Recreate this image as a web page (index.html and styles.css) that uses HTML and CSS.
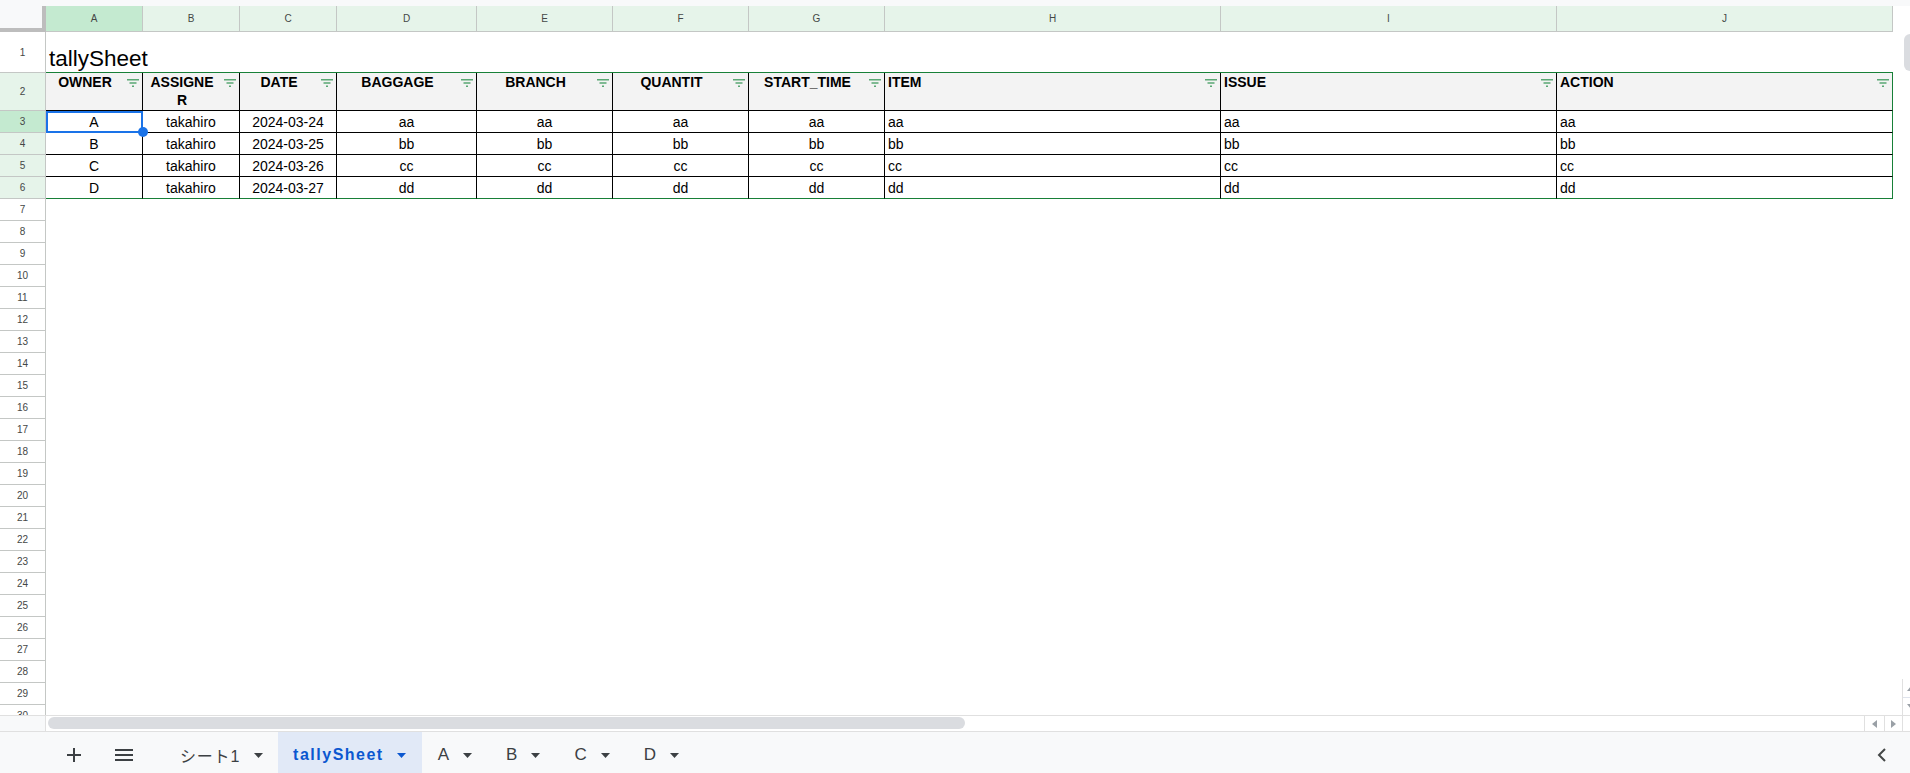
FILE: index.html
```html
<!DOCTYPE html>
<html lang="ja">
<head>
<meta charset="utf-8">
<title>tallySheet</title>
<link rel="stylesheet" href="styles.css">
</head>
<body>
<div class="app">
  <div class="topstrip"></div>
  <div class="main">
    <div class="grid">
      <table class="sheet">
        <colgroup>
          <col class="w-rh"><col class="w-s"><col class="w-s"><col class="w-s"><col class="w-d"><col class="w-m"><col class="w-m"><col class="w-m"><col class="w-l"><col class="w-l"><col class="w-l">
        </colgroup>
        <tr class="colhead">
          <th class="corner"></th><th class="sel">A</th><th>B</th><th>C</th><th>D</th><th>E</th><th>F</th><th>G</th><th>H</th><th>I</th><th>J</th>
        </tr>
        <tr class="r1">
          <th class="rh">1</th><td class="title" colspan="10">tallySheet</td>
        </tr>
        <tr class="r2">
          <th class="rh g">2</th>
          <td class="hd"><div class="in"><span class="t">OWNER</span><svg class="fi" width="12" height="8" viewBox="0 0 12 8"><path d="M0 0h12v1.6H0zM2.5 3.2h7v1.6h-7zM5 6.4h2V8H5z"/></svg></div></td>
          <td class="hd"><div class="in"><span class="t">ASSIGNE<br>R</span><svg class="fi" width="12" height="8" viewBox="0 0 12 8"><path d="M0 0h12v1.6H0zM2.5 3.2h7v1.6h-7zM5 6.4h2V8H5z"/></svg></div></td>
          <td class="hd"><div class="in"><span class="t">DATE</span><svg class="fi" width="12" height="8" viewBox="0 0 12 8"><path d="M0 0h12v1.6H0zM2.5 3.2h7v1.6h-7zM5 6.4h2V8H5z"/></svg></div></td>
          <td class="hd"><div class="in"><span class="t">BAGGAGE</span><svg class="fi" width="12" height="8" viewBox="0 0 12 8"><path d="M0 0h12v1.6H0zM2.5 3.2h7v1.6h-7zM5 6.4h2V8H5z"/></svg></div></td>
          <td class="hd"><div class="in"><span class="t">BRANCH</span><svg class="fi" width="12" height="8" viewBox="0 0 12 8"><path d="M0 0h12v1.6H0zM2.5 3.2h7v1.6h-7zM5 6.4h2V8H5z"/></svg></div></td>
          <td class="hd"><div class="in"><span class="t">QUANTIT</span><svg class="fi" width="12" height="8" viewBox="0 0 12 8"><path d="M0 0h12v1.6H0zM2.5 3.2h7v1.6h-7zM5 6.4h2V8H5z"/></svg></div></td>
          <td class="hd"><div class="in"><span class="t">START_TIME</span><svg class="fi" width="12" height="8" viewBox="0 0 12 8"><path d="M0 0h12v1.6H0zM2.5 3.2h7v1.6h-7zM5 6.4h2V8H5z"/></svg></div></td>
          <td class="hd left"><div class="in"><span class="t">ITEM</span><svg class="fi" width="12" height="8" viewBox="0 0 12 8"><path d="M0 0h12v1.6H0zM2.5 3.2h7v1.6h-7zM5 6.4h2V8H5z"/></svg></div></td>
          <td class="hd left"><div class="in"><span class="t">ISSUE</span><svg class="fi" width="12" height="8" viewBox="0 0 12 8"><path d="M0 0h12v1.6H0zM2.5 3.2h7v1.6h-7zM5 6.4h2V8H5z"/></svg></div></td>
          <td class="hd left last"><div class="in"><span class="t">ACTION</span><svg class="fi" width="12" height="8" viewBox="0 0 12 8"><path d="M0 0h12v1.6H0zM2.5 3.2h7v1.6h-7zM5 6.4h2V8H5z"/></svg></div></td>
        </tr>
        <tr class="r">
          <th class="rh gs">3</th>
          <td class="c cur">A<div class="selbox"></div><div class="handle"></div></td><td class="c">takahiro</td><td class="c">2024-03-24</td><td class="c">aa</td><td class="c">aa</td><td class="c">aa</td><td class="c">aa</td><td class="l">aa</td><td class="l">aa</td><td class="l last">aa</td>
        </tr>
        <tr class="r">
          <th class="rh g">4</th>
          <td class="c">B</td><td class="c">takahiro</td><td class="c">2024-03-25</td><td class="c">bb</td><td class="c">bb</td><td class="c">bb</td><td class="c">bb</td><td class="l">bb</td><td class="l">bb</td><td class="l last">bb</td>
        </tr>
        <tr class="r">
          <th class="rh g">5</th>
          <td class="c">C</td><td class="c">takahiro</td><td class="c">2024-03-26</td><td class="c">cc</td><td class="c">cc</td><td class="c">cc</td><td class="c">cc</td><td class="l">cc</td><td class="l">cc</td><td class="l last">cc</td>
        </tr>
        <tr class="r r6">
          <th class="rh g">6</th>
          <td class="c">D</td><td class="c">takahiro</td><td class="c">2024-03-27</td><td class="c">dd</td><td class="c">dd</td><td class="c">dd</td><td class="c">dd</td><td class="l">dd</td><td class="l">dd</td><td class="l last">dd</td>
        </tr>
        <tr class="r"><th class="rh">7</th><td colspan="10"></td></tr>
        <tr class="r"><th class="rh">8</th><td colspan="10"></td></tr>
        <tr class="r"><th class="rh">9</th><td colspan="10"></td></tr>
        <tr class="r"><th class="rh">10</th><td colspan="10"></td></tr>
        <tr class="r"><th class="rh">11</th><td colspan="10"></td></tr>
        <tr class="r"><th class="rh">12</th><td colspan="10"></td></tr>
        <tr class="r"><th class="rh">13</th><td colspan="10"></td></tr>
        <tr class="r"><th class="rh">14</th><td colspan="10"></td></tr>
        <tr class="r"><th class="rh">15</th><td colspan="10"></td></tr>
        <tr class="r"><th class="rh">16</th><td colspan="10"></td></tr>
        <tr class="r"><th class="rh">17</th><td colspan="10"></td></tr>
        <tr class="r"><th class="rh">18</th><td colspan="10"></td></tr>
        <tr class="r"><th class="rh">19</th><td colspan="10"></td></tr>
        <tr class="r"><th class="rh">20</th><td colspan="10"></td></tr>
        <tr class="r"><th class="rh">21</th><td colspan="10"></td></tr>
        <tr class="r"><th class="rh">22</th><td colspan="10"></td></tr>
        <tr class="r"><th class="rh">23</th><td colspan="10"></td></tr>
        <tr class="r"><th class="rh">24</th><td colspan="10"></td></tr>
        <tr class="r"><th class="rh">25</th><td colspan="10"></td></tr>
        <tr class="r"><th class="rh">26</th><td colspan="10"></td></tr>
        <tr class="r"><th class="rh">27</th><td colspan="10"></td></tr>
        <tr class="r"><th class="rh">28</th><td colspan="10"></td></tr>
        <tr class="r"><th class="rh">29</th><td colspan="10"></td></tr>
        <tr class="r"><th class="rh">30</th><td colspan="10"></td></tr>
      </table>
    </div>
    <div class="vscroll">
      <div class="vthumb"></div>
      <div class="varrows">
        <div class="varrow"><svg width="8" height="5" viewBox="0 0 8 5"><path d="M0 5L4 0L8 5z"/></svg></div>
        <div class="varrow"><svg width="8" height="5" viewBox="0 0 8 5"><path d="M0 0L4 5L8 0z"/></svg></div>
      </div>
    </div>
  </div>
  <div class="hscroll">
    <div class="hs-left"></div>
    <div class="hs-track"><div class="hs-thumb"></div></div>
    <div class="hs-btn b1"><svg width="5" height="8" viewBox="0 0 5 8"><path d="M5 0L0 4L5 8z"/></svg></div>
    <div class="hs-btn b2"><svg width="5" height="8" viewBox="0 0 5 8"><path d="M0 0L5 4L0 8z"/></svg></div>
    <div class="hs-corner"></div>
  </div>
  <div class="tabbar">
    <div class="tb-btn first"><svg width="14" height="14" viewBox="0 0 14 14"><path d="M6 0h2v6h6v2H8v6H6V8H0V6h6z"/></svg></div>
    <div class="tb-btn"><svg width="18" height="12" viewBox="0 0 18 12"><path d="M0 0h18v2H0zM0 5h18v2H0zM0 10h18v2H0z"/></svg></div>
    <div class="tab jp"><span class="lbl">シート1</span><svg class="dd" width="9" height="5" viewBox="0 0 9 5"><path d="M0 0h9L4.5 5z"/></svg></div>
    <div class="tab active"><span class="lbl">tallySheet</span><svg class="dd" width="9" height="5" viewBox="0 0 9 5"><path d="M0 0h9L4.5 5z"/></svg></div>
    <div class="tab"><span class="lbl">A</span><svg class="dd" width="9" height="5" viewBox="0 0 9 5"><path d="M0 0h9L4.5 5z"/></svg></div>
    <div class="tab"><span class="lbl">B</span><svg class="dd" width="9" height="5" viewBox="0 0 9 5"><path d="M0 0h9L4.5 5z"/></svg></div>
    <div class="tab"><span class="lbl">C</span><svg class="dd" width="9" height="5" viewBox="0 0 9 5"><path d="M0 0h9L4.5 5z"/></svg></div>
    <div class="tab"><span class="lbl">D</span><svg class="dd" width="9" height="5" viewBox="0 0 9 5"><path d="M0 0h9L4.5 5z"/></svg></div>
    <div class="chev"><svg width="10" height="14" viewBox="0 0 10 14"><path d="M8 1L2 7l6 6" fill="none" stroke="#444746" stroke-width="2"/></svg></div>
  </div>
</div>
</body>
</html>
```
FILE: styles.css
```css
* { box-sizing: border-box; }
html, body { margin: 0; padding: 0; }
body {
  width: 1910px;
  height: 773px;
  overflow: hidden;
  background: #fff;
  color: #000;
  font-family: "Liberation Sans", Arial, "Noto Sans CJK JP", sans-serif;
}
.app { display: flex; flex-direction: column; height: 773px; }
.topstrip { height: 6px; flex: none; background: #f8f9fa; }
.main { display: flex; height: 709px; flex: none; }
.grid { width: 1902px; flex: none; overflow: hidden; background: #fff; }

/* sheet grid */
.sheet {
  border-collapse: separate;
  border-spacing: 0;
  table-layout: fixed;
  width: 1893px;
  font-size: 14px;
}
.w-rh { width: 46px; }
.w-s { width: 97px; }
.w-d { width: 140px; }
.w-m { width: 136px; }
.w-l { width: 336px; }

.sheet td, .sheet th { padding: 0 3px; overflow: hidden; white-space: nowrap; }

.colhead th {
  height: 26px;
  background: #e6f4ea;
  border-right: 1px solid #c4c7c5;
  border-bottom: 1px solid #c4c7c5;
  font-weight: normal;
  font-size: 10px;
  color: #444746;
  text-align: center;
  vertical-align: middle;
}
.colhead th.sel { background: #c4ead0; }
.colhead th.corner {
  background: #f8f9fa;
  box-shadow: inset -3px -3px 0 #bdbdbd;
  border-right-color: #bdbdbd;
  border-bottom-color: #bdbdbd;
}

.rh {
  background: #fff;
  border-right: 1px solid #c4c7c5;
  border-bottom: 1px solid #c4c7c5;
  font-weight: normal;
  font-size: 10px;
  color: #444746;
  text-align: center;
  vertical-align: middle;
}
.rh.g { background: #e6f4ea; }
.rh.gs { background: #c4ead0; }

.r1 th, .r1 td { height: 41px; }
.r2 th, .r2 td { height: 38px; }
.r th, .r td { height: 22px; }

.title {
  vertical-align: bottom;
  padding: 0 3px 3px 4px;
  font-size: 22.5px;
  border-bottom: 1px solid #188038;
}

.hd {
  background: #f3f3f3;
  vertical-align: top;
  font-weight: bold;
  line-height: 18px;
  border-right: 1px solid #000;
  border-bottom: 1px solid #000;
  padding: 0 4px 0 3px;
}
.hd .in { display: flex; align-items: flex-start; }
.hd .t { flex: 1; text-align: center; }
.hd.left .t { text-align: left; }
.fi { flex: none; margin: 6px 0 0 6px; fill: #5aa874; }

.c, .l {
  line-height: 16px;
  vertical-align: middle;
  border-right: 1px solid #000;
  border-bottom: 1px solid #000;
}
.c { text-align: center; }
.l { text-align: left; padding-left: 4px; }
.sheet .last { border-right-color: #188038; }
.r6 td { border-bottom-color: #188038; }

.sheet td.cur { position: relative; overflow: visible; }
.selbox {
  position: absolute;
  left: 0; top: 0; right: -1px; bottom: -1px;
  border: 2px solid #1a73e8;
  z-index: 2;
}
.handle {
  position: absolute;
  width: 10px; height: 10px;
  right: -6px; bottom: -5px;
  border-radius: 50%;
  background: #1a73e8;
  z-index: 3;
}

/* vertical scrollbar */
.vscroll {
  width: 8px;
  flex: none;
  display: flex;
  flex-direction: column;
  justify-content: space-between;
  overflow: hidden;
  background: #fff;
}
.vthumb {
  flex: none;
  width: 12px;
  height: 37px;
  margin: 28px 0 0 2px;
  background: #dadce0;
  border-radius: 6px;
}
.varrows {
  flex: none;
  width: 16px;
  border-left: 1px solid #e0e0e0;
}
.varrow {
  height: 18px;
  display: flex;
  align-items: center;
  justify-content: center;
  fill: #9aa0a6;
}
.varrow + .varrow { border-top: 1px solid #dfe3ec; }

/* horizontal scrollbar */
.hscroll {
  height: 16px;
  flex: none;
  display: flex;
  border-top: 1px solid #e0e0e0;
  background: #fff;
}
.hs-left { width: 46px; flex: none; background: #f8f9fa; border-right: 1px solid #e0e0e0; }
.hs-track { flex: 1; }
.hs-thumb {
  width: 917px;
  height: 12px;
  margin: 1px 0 0 2px;
  background: #dadce0;
  border-radius: 6px;
}
.hs-btn {
  flex: none;
  border-left: 1px solid #e0e0e0;
  display: flex;
  align-items: center;
  justify-content: center;
  fill: #9aa0a6;
}
.hs-btn.b1 { width: 20px; }
.hs-btn.b2 { width: 18px; }
.hs-corner { width: 8px; flex: none; border-left: 1px solid #e0e0e0; }

/* sheet tabs */
.tabbar {
  height: 42px;
  flex: none;
  display: flex;
  align-items: stretch;
  background: #f8f9fa;
  border-top: 1px solid #e0e0e0;
}
.tb-btn {
  width: 40px;
  flex: none;
  display: flex;
  align-items: center;
  justify-content: center;
  padding-top: 5px;
  fill: #3c4043;
  margin-left: 10px;
}
.tb-btn.first { margin-left: 54px; }
.tab {
  flex: none;
  display: flex;
  align-items: center;
  gap: 14px;
  padding: 5px 18px 0 16px;
  font-size: 17px;
  color: #3c4043;
  fill: #3c4043;
}
.tab.jp { margin-left: 21px; padding-left: 15px; padding-right: 15px; font-size: 16px; letter-spacing: 0.8px; }
.tab.active {
  background: #e1e9f7;
  color: #0b57d0;
  fill: #0b57d0;
  font-size: 16px;
  font-weight: bold;
  letter-spacing: 1.5px;
  padding-left: 15px;
  padding-right: 16px;
  gap: 13px;
}
.dd { flex: none; }
.chev {
  margin-left: auto;
  margin-right: 23px;
  display: flex;
  align-items: center;
  padding-top: 5px;
}
```
